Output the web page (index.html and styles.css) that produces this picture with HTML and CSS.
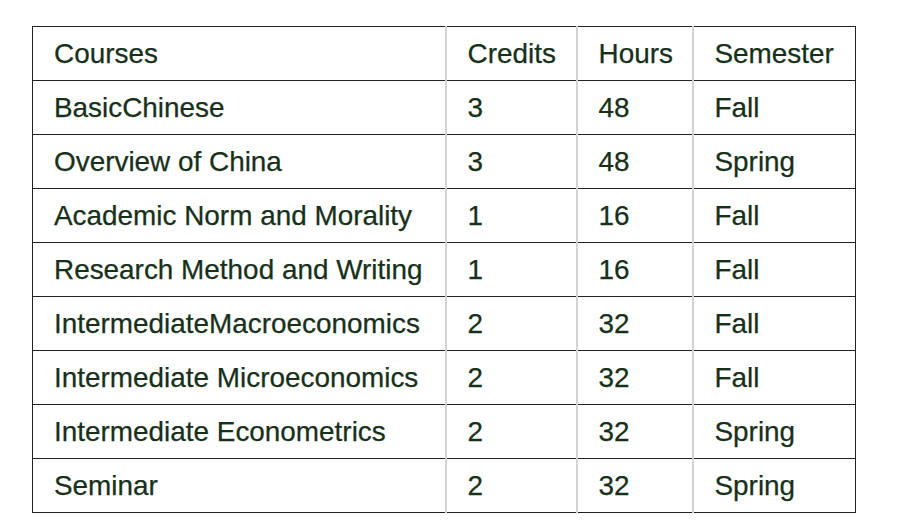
FILE: index.html
```html
<!DOCTYPE html>
<html>
<head>
<meta charset="utf-8">
<link rel="stylesheet" href="styles.css">
</head>
<body>
<div class="wrap">
<table class="courses">
  <colgroup>
    <col class="c1"><col class="c2"><col class="c3"><col class="c4">
  </colgroup>
  <tr><td>Courses</td><td class="lt">Credits</td><td class="lt">Hours</td><td>Semester</td></tr>
  <tr><td>BasicChinese</td><td class="lt">3</td><td class="lt">48</td><td>Fall</td></tr>
  <tr><td>Overview of China</td><td class="lt">3</td><td class="lt">48</td><td>Spring</td></tr>
  <tr><td>Academic Norm and Morality</td><td class="lt">1</td><td class="lt">16</td><td>Fall</td></tr>
  <tr><td>Research Method and Writing</td><td class="lt">1</td><td class="lt">16</td><td>Fall</td></tr>
  <tr><td>IntermediateMacroeconomics</td><td class="lt">2</td><td class="lt">32</td><td>Fall</td></tr>
  <tr><td>Intermediate Microeconomics</td><td class="lt">2</td><td class="lt">32</td><td>Fall</td></tr>
  <tr><td>Intermediate Econometrics</td><td class="lt">2</td><td class="lt">32</td><td>Spring</td></tr>
  <tr><td>Seminar</td><td class="lt">2</td><td class="lt">32</td><td>Spring</td></tr>
</table>
</div>
</body>
</html>
```
FILE: styles.css
```css
html, body {
  margin: 0;
  padding: 0;
  background: #ffffff;
}
.wrap {
  padding: 26px 0 0 32px;
}
.courses {
  border-collapse: collapse;
  table-layout: fixed;
  width: 823px;
  font-family: "Liberation Sans", Arial, sans-serif;
  font-size: 27.9px;
  color: #17301a;
  -webkit-text-stroke: 0.25px #17301a;
}
.c1 { width: 413px; }
.c2 { width: 131px; }
.c3 { width: 116px; }
.c4 { width: 163px; }
.courses td {
  height: 53px;
  padding: 0 0 0 21px;
  border: 1.5px solid #222222;
  vertical-align: middle;
  white-space: nowrap;
  line-height: 1;
}
.courses td.lt {
  border-left: 2px solid #d3d3d3;
  border-right: 2px solid #d3d3d3;
}
```
